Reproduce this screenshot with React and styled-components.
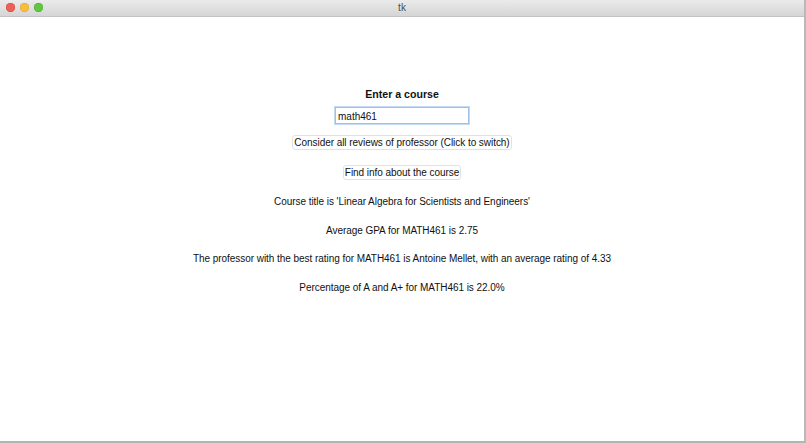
import styled, { createGlobalStyle } from "styled-components";

const GlobalStyle = createGlobalStyle`
  html, body {
    margin: 0;
    padding: 0;
    width: 806px;
    height: 443px;
    overflow: hidden;
    background: #ffffff;
  }
  body {
    font-family: "Liberation Sans", Arial, sans-serif;
  }
`;

const lines = [
  "Course title is 'Linear Algebra for Scientists and Engineers'",
  "Average GPA for MATH461 is 2.75",
  "The professor with the best rating for MATH461 is Antoine Mellet, with an average rating of 4.33",
  "Percentage of A and A+ for MATH461 is 22.0%",
];

function App() {
  return (
    <>
      <GlobalStyle />
      <Window>
        <TitleBar>
          <Lights>
            <Light color="#ee5f58" edge="#d9473f" />
            <Light color="#f8be3b" edge="#dea230" />
            <Light color="#5fc73e" edge="#4aa92e" />
          </Lights>
          <Title>tk</Title>
        </TitleBar>
        <Content>
          <Heading>Enter a course</Heading>
          <Field defaultValue="math461" />
          <Button $top={11}>Consider all reviews of professor (Click to switch)</Button>
          <Button $top={15}>Find info about the course</Button>
          <Results>
            {lines.map((l) => (
              <Line key={l}>{l}</Line>
            ))}
          </Results>
        </Content>
      </Window>
    </>
  );
}
export default App;

const Window = styled.div`
  width: 806px;
  height: 443px;
  box-sizing: border-box;
  display: flex;
  flex-direction: column;
  border-right: 2px solid #b9b9b9;
  border-bottom: 2px solid #b4b4b4;
  background: #fff;
`;

const TitleBar = styled.div`
  position: relative;
  height: 16px;
  flex: none;
  background: linear-gradient(#ebebeb, #d5d5d5);
  border-bottom: 1px solid #c2c2c2;
  display: flex;
  align-items: center;
  justify-content: center;
`;

const Lights = styled.div`
  position: absolute;
  left: 6px;
  top: 3px;
  display: flex;
  gap: 5px;
`;

const Light = styled.span`
  width: 9px;
  height: 9px;
  border-radius: 50%;
  background: ${(p) => p.color};
  box-shadow: inset 0 0 0 0.5px ${(p) => p.edge};
`;

const Title = styled.span`
  font-size: 10px;
  color: #4d4d4d;
  line-height: 16px;
`;

const Content = styled.div`
  flex: 1;
  display: flex;
  flex-direction: column;
  align-items: center;
  padding-top: 70px;
`;

const Heading = styled.div`
  font-size: 10.6px;
  font-weight: bold;
  color: #111;
  line-height: 14px;
`;

const Field = styled.input`
  margin-top: 6px;
  width: 134px;
  height: 17px;
  box-sizing: border-box;
  border: 1px solid #9ec1ea;
  box-shadow: 0 0 0 1px #c4d9f3;
  outline: none;
  padding: 1px 2px 0;
  font-family: "Liberation Sans", Arial, sans-serif;
  font-size: 10px;
  color: #111;
`;

const Button = styled.button`
  margin-top: ${(p) => p.$top ?? 10}px;
  height: 15px;
  padding: 0 1px;
  background: #fff;
  border: 1px solid #e2e2e2;
  border-radius: 3px;
  font-family: "Liberation Sans", Arial, sans-serif;
  font-size: 10px;
  letter-spacing: -0.05px;
  color: #111;
  line-height: 13px;
`;

const Results = styled.div`
  margin-top: 16px;
  display: flex;
  flex-direction: column;
  align-items: center;
  gap: 16.7px;
`;

const Line = styled.div`
  font-size: 10px;
  letter-spacing: -0.05px;
  line-height: 12px;
  color: #111;
`;
